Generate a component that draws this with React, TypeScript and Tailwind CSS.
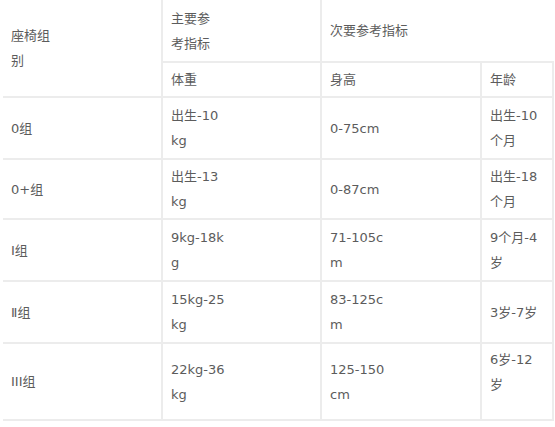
import React from 'react';

interface Row {
  group: string;
  weight: string[];
  height: string[];
  age: string[];
  h: string;
  ageClass?: string;
}

const rows: Row[] = [
  { group: '0组', weight: ['出生-10', 'kg'], height: ['0-75cm'], age: ['出生-10', '个月'], h: 'h-[62px]' },
  { group: '0+组', weight: ['出生-13', 'kg'], height: ['0-87cm'], age: ['出生-18', '个月'], h: 'h-[60px]' },
  { group: 'Ⅰ组', weight: ['9kg-18k', 'g'], height: ['71-105c', 'm'], age: ['9个月-4', '岁'], h: 'h-[62px]' },
  { group: 'Ⅱ组', weight: ['15kg-25', 'kg'], height: ['83-125c', 'm'], age: ['3岁-7岁'], h: 'h-[62px]' },
  { group: 'III组', weight: ['22kg-36', 'kg'], height: ['125-150', 'cm'], age: ['6岁-12', '岁'], h: 'h-[77px]', ageClass: 'pb-[20px]' },
];

const Lines = ({ lines }: { lines: string[] }) => (
  <>
    {lines.map((l, i) => (
      <div key={i}>{l}</div>
    ))}
  </>
);

const cell = 'border-[#ececec] pl-[8px] pr-1 align-middle text-left font-normal';

export default function App() {
  return (
    <div
      className="w-[555px] h-[427px] bg-white overflow-hidden text-[13px] leading-[25px] text-[#5c5c5c]"
      style={{ fontFamily: '"DejaVu Sans", "Noto Sans CJK SC", sans-serif' }}
    >
      <table className="ml-[3px] w-[550px] border-collapse table-fixed">
        <colgroup>
          <col className="w-[159px]" />
          <col className="w-[159px]" />
          <col className="w-[160px]" />
          <col className="w-[72px]" />
        </colgroup>
        <thead>
          <tr className="h-[62px]">
            <th rowSpan={2} className={`${cell} border-b-2 border-r-2`}>
              <Lines lines={['座椅组', '别']} />
            </th>
            <th className={`${cell} border-b-2 border-r-2`}>
              <Lines lines={['主要参', '考指标']} />
            </th>
            <th colSpan={2} className={`${cell} border-b-2`}>
              次要参考指标
            </th>
          </tr>
          <tr className="h-[35px]">
            <th className={`${cell} border-b-2 border-r-2`}>体重</th>
            <th className={`${cell} border-b-2 border-r-2`}>身高</th>
            <th className={`${cell} border-b-2 border-r-2`}>年龄</th>
          </tr>
        </thead>
        <tbody>
          {rows.map((r) => (
            <tr key={r.group} className={r.h}>
              <td className={`${cell} border-b-2 border-r-2`}>{r.group}</td>
              <td className={`${cell} border-b-2 border-r-2`}>
                <Lines lines={r.weight} />
              </td>
              <td className={`${cell} border-b-2 border-r-2`}>
                <Lines lines={r.height} />
              </td>
              <td className={`${cell} border-b-2 border-r-2 ${r.ageClass ?? ''}`}>
                <Lines lines={r.age} />
              </td>
            </tr>
          ))}
        </tbody>
      </table>
    </div>
  );
}
